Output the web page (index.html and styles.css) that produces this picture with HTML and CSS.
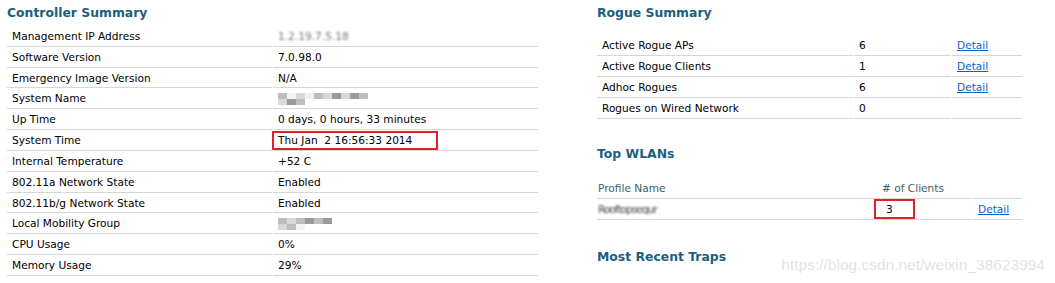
FILE: index.html
```html
<!DOCTYPE html>
<html lang="en">
  <head>
    <meta charset="UTF-8">
    <title>Monitor Summary</title>
    <link rel="stylesheet" href="styles.css">
  </head>
  <body>
    <div class="page">
      <!-- Left column -->
      <div class="col-left">
        <h2 class="title">Controller Summary</h2>
        <table class="grid summary">
          <tr><td class="label">Management IP Address</td><td class="value"><span class="blurred">1.2.19.7.5.18</span></td></tr>
          <tr><td class="label">Software Version</td><td class="value">7.0.98.0</td></tr>
          <tr><td class="label">Emergency Image Version</td><td class="value">N/A</td></tr>
          <tr><td class="label">System Name</td><td class="value">
            <span class="mosaic">
              <i class="m2"></i><i class="m0"></i><i class="m1"></i><i class="m0"></i><i class="m2"></i><i class="m1"></i><i class="m3"></i><i class="m1"></i><i class="m3"></i><i class="m2"></i><i class="m1"></i><i class="m3"></i><i class="m2"></i>
            </span>
          </td></tr>
          <tr><td class="label">Up Time</td><td class="value">0 days, 0 hours, 33 minutes</td></tr>
          <tr><td class="label">System Time</td><td class="value"><span class="mark mark-time">Thu Jan &nbsp;2 16:56:33 2014</span></td></tr>
          <tr><td class="label">Internal Temperature</td><td class="value">+52 C</td></tr>
          <tr><td class="label">802.11a Network State</td><td class="value">Enabled</td></tr>
          <tr><td class="label">802.11b/g Network State</td><td class="value">Enabled</td></tr>
          <tr><td class="label">Local Mobility Group</td><td class="value">
            <span class="mosaic short">
              <i class="m2"></i><i class="m1"></i><i class="m2"></i><i class="m3"></i><i class="m2"></i><i class="m3"></i><i class="m1"></i><i class="m2"></i><i class="m0"></i>
            </span>
          </td></tr>
          <tr><td class="label">CPU Usage</td><td class="value">0%</td></tr>
          <tr><td class="label">Memory Usage</td><td class="value">29%</td></tr>
        </table>
      </div>

      <!-- Right column -->
      <div class="col-right">
        <h2 class="title">Rogue Summary</h2>
        <table class="grid rogue">
          <tr><td class="label">Active Rogue APs</td><td class="num">6</td><td class="link"><a href="#">Detail</a></td></tr>
          <tr><td class="label">Active Rogue Clients</td><td class="num">1</td><td class="link"><a href="#">Detail</a></td></tr>
          <tr><td class="label">Adhoc Rogues</td><td class="num">6</td><td class="link"><a href="#">Detail</a></td></tr>
          <tr><td class="label">Rogues on Wired Network</td><td class="num">0</td><td class="link"></td></tr>
        </table>

        <h2 class="title title-wlan">Top WLANs</h2>
        <table class="grid wlan">
          <tr class="head"><td class="profile">Profile Name</td><td class="clients"># of Clients</td><td class="link"></td></tr>
          <tr>
            <td class="profile"><span class="blurred wlan-name">Rooftopsequr</span></td>
            <td class="clients"><span class="mark mark-count">3</span></td>
            <td class="link"><a href="#">Detail</a></td>
          </tr>
        </table>

        <h2 class="title title-traps">Most Recent Traps</h2>
      </div>
    </div>
    <div class="watermark">https://blog.csdn.net/weixin_38623994</div>
  </body>
</html>
```

FILE: styles.css
```css
/* General */
body {
  margin: 0;
  font-family: "DejaVu Sans", Verdana, sans-serif;
  font-size: 10.6px;
  color: #000;
  background: #fff;
}

.page {
  display: flex;
  align-items: flex-start;
}

.col-left {
  width: 531px;
  margin-left: 7px;
}

.col-right {
  width: 425px;
  margin-left: 59px;
}

.title {
  font-size: 12.4px;
  line-height: 16px;
  font-weight: bold;
  color: #1a5e80;
  margin: 5px 0 4px;
}

.col-left .title {
  margin-bottom: 5px;
}

/* Tables */
.grid {
  border-collapse: separate;
  border-spacing: 1px 0;
  margin: 0 -1px;
  width: calc(100% + 2px);
}

.grid td {
  height: 19.83px;
  padding: 0 0 0 5px;
  border-bottom: 1px solid #d6d6d6;
  vertical-align: middle;
  white-space: nowrap;
}

.summary .label {
  width: 260px;
}

.summary .value {
  padding-left: 5px;
}

.rogue {
  margin-top: 14px;
}

.rogue td {
  height: 20px;
}

.rogue .label {
  width: 251px;
}

.rogue .num {
  width: 92px;
}

.link a {
  color: #0d60c8;
  text-decoration: underline;
}

.title-wlan {
  margin-top: 27px;
}

.wlan {
  margin-top: 16px;
}

.wlan td {
  height: 20px;
}

.wlan .profile {
  width: 282px;
  padding-left: 1px;
}

.wlan .clients {
  width: 90px;
  padding-left: 1px;
}

.wlan .link {
  padding-left: 5px;
}

.wlan .head td {
  color: #3d6262;
}

.title-traps {
  margin-top: 29px;
}

/* Highlight boxes */
.mark {
  display: inline-block;
  border: 2px solid #e0202a;
  line-height: 15px;
}

.mark-time {
  width: 158px;
  margin-left: -6px;
  padding-left: 4px;
}

.mark-count {
  width: 27px;
  line-height: 16px;
  margin-left: -8px;
  padding-left: 10px;
}

/* Blurred data */
.blurred {
  color: #777;
  filter: blur(0.8px);
}

.wlan-name {
  color: #444;
  letter-spacing: -1px;
}

.mosaic {
  display: inline-flex;
  flex-wrap: wrap;
  width: 90px;
  height: 12px;
  vertical-align: middle;
}

.mosaic.short {
  width: 54px;
}

.mosaic i {
  display: block;
  width: 9px;
  height: 6px;
}

.m0 { background: #f2f2f2; }
.m1 { background: #d8d8d8; }
.m2 { background: #bdbdbd; }
.m3 { background: #9a9a9a; }

/* Watermark */
.watermark {
  position: absolute;
  right: 10px;
  top: 256px;
  font-family: "Liberation Sans", Arial, sans-serif;
  font-size: 15.5px;
  color: rgba(190, 190, 190, 0.45);
}
```
